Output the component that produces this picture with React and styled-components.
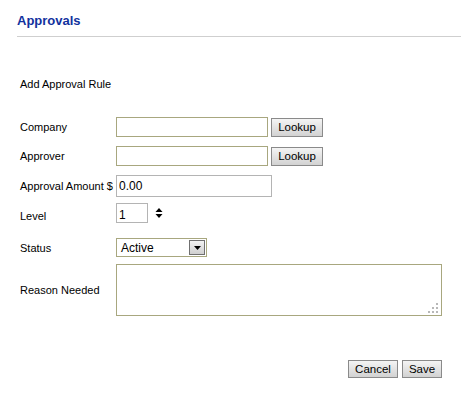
import React from "react";
import styled, { createGlobalStyle } from "styled-components";

const GlobalStyle = createGlobalStyle`
    body {
        margin: 0;
        background: #fff;
        font-family: "Liberation Sans", Arial, sans-serif;
        font-size: 11px;
        color: #000;
    }
`;

const Page = styled.div`
    width: 461px;
    height: 399px;
    overflow: hidden;
`;

const Header = styled.div`
    margin-left: 17px;
    padding-top: 13px;
    padding-bottom: 7px;
    border-bottom: 1px solid #cfcfcf;
`;

const Title = styled.h2`
    margin: 0;
    font-size: 13px;
    line-height: 16px;
    font-weight: bold;
    color: #12329e;
`;

const Form = styled.div`
    width: 422px;
    padding-left: 20px;
    display: flex;
    flex-direction: column;
`;

const Subtitle = styled.div`
    margin-top: 40px;
    line-height: 14px;
`;

const Row = styled.div`
    display: flex;
    align-items: center;
    margin-top: ${props => props.$top}px;
    height: ${props => props.$h}px;
`;

const Label = styled.label`
    width: 96px;
    flex: none;
    white-space: nowrap;
    padding-top: ${props => props.$drop || 0}px;
`;

const Input = styled.input`
    box-sizing: border-box;
    width: ${props => props.$w}px;
    height: ${props => props.$h || 20}px;
    border: 1px solid ${props => props.$gray ? "#b4b4b4" : "#a8a77f"};
    padding: ${props => props.$drop || 0}px 2px 0;
    font-family: "Liberation Sans", Arial, sans-serif;
    font-size: 12px;
    color: #000;
    outline: none;
`;

const Button = styled.button`
    box-sizing: border-box;
    width: ${props => props.$w}px;
    height: ${props => props.$h || 19}px;
    margin-left: ${props => props.$ml || 0}px;
    padding: 0;
    border: 1px solid #8a8a8a;
    background: linear-gradient(#f4f4f4, #d2d2d2);
    font-family: "Liberation Sans", Arial, sans-serif;
    font-size: 11.5px;
    color: #000;
`;

const Spinner = styled.svg`
    margin-left: 7px;
`;

const Select = styled.div`
    box-sizing: border-box;
    width: 91px;
    height: 19px;
    border: 1px solid #a8a77f;
    display: flex;
    align-items: center;
    justify-content: space-between;
    padding-left: 4px;
    font-size: 12px;
`;

const SelectArrow = styled.div`
    box-sizing: border-box;
    width: 16px;
    height: 15px;
    margin-right: 1px;
    border: 1px solid #707070;
    background: linear-gradient(#f2f2f2, #cfcfcf);
    display: flex;
    align-items: center;
    justify-content: center;
`;

const AreaWrap = styled.div`
    position: relative;
    width: 327px;
    height: 52px;
`;

const TextArea = styled.textarea`
    box-sizing: border-box;
    width: 100%;
    height: 100%;
    border: 1px solid #a8a77f;
    resize: none;
    outline: none;
    display: block;
`;

const Grip = styled.svg`
    position: absolute;
    right: 4px;
    bottom: 3px;
`;

const Actions = styled.div`
    display: flex;
    justify-content: flex-end;
    gap: 4px;
    margin-top: 44px;
`;

const App = () => {
    return (
        <Page>
            <GlobalStyle />
            <Header>
                <Title>Approvals</Title>
            </Header>
            <Form>
                <Subtitle>Add Approval Rule</Subtitle>
                <Row $top={26} $h={20}>
                    <Label>Company</Label>
                    <Input $w={152} />
                    <Button $w={52} $ml={3}>Lookup</Button>
                </Row>
                <Row $top={9} $h={20}>
                    <Label>Approver</Label>
                    <Input $w={152} />
                    <Button $w={52} $ml={3}>Lookup</Button>
                </Row>
                <Row $top={9} $h={22}>
                    <Label>Approval Amount $</Label>
                    <Input $w={156} $h={22} $gray defaultValue="0.00" />
                </Row>
                <Row $top={6} $h={20}>
                    <Label $drop={6}>Level</Label>
                    <Input $w={32} $gray $drop={4} defaultValue="1" />
                    <Spinner width="8" height="12" viewBox="0 0 8 12">
                        <path d="M4 1 L7.5 5 L0.5 5 Z" fill="#000" />
                        <path d="M0.5 7 L7.5 7 L4 11 Z" fill="#000" />
                    </Spinner>
                </Row>
                <Row $top={15} $h={19}>
                    <Label>Status</Label>
                    <Select>
                        <span>Active</span>
                        <SelectArrow>
                            <svg width="7" height="4" viewBox="0 0 7 4">
                                <path d="M0 0 L7 0 L3.5 4 Z" fill="#000" />
                            </svg>
                        </SelectArrow>
                    </Select>
                </Row>
                <Row $top={7} $h={52}>
                    <Label>Reason Needed</Label>
                    <AreaWrap>
                        <TextArea />
                        <Grip width="10" height="10" viewBox="0 0 10 10">
                            <rect x="8" y="0" width="2" height="2" fill="#b8b8b8" />
                            <rect x="4" y="4" width="2" height="2" fill="#b8b8b8" />
                            <rect x="8" y="4" width="2" height="2" fill="#b8b8b8" />
                            <rect x="0" y="8" width="2" height="2" fill="#b8b8b8" />
                            <rect x="4" y="8" width="2" height="2" fill="#b8b8b8" />
                            <rect x="8" y="8" width="2" height="2" fill="#b8b8b8" />
                        </Grip>
                    </AreaWrap>
                </Row>
                <Actions>
                    <Button $w={50} $h={18}>Cancel</Button>
                    <Button $w={40} $h={18}>Save</Button>
                </Actions>
            </Form>
        </Page>
    );
};

export default App;
